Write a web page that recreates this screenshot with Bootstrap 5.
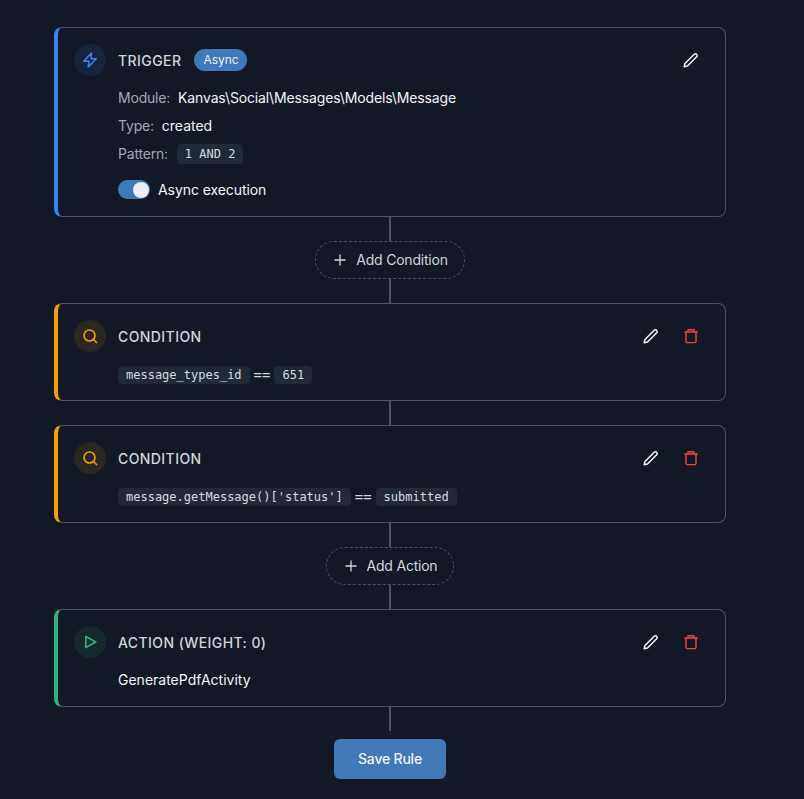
<!DOCTYPE html>
<html lang="en">
<head>
<meta charset="utf-8">
<title>Rule</title>
<link href="https://cdn.jsdelivr.net/npm/bootstrap@5.3.0/dist/css/bootstrap.min.css" rel="stylesheet">
<style>
html,body{background:#121826;height:799px;overflow:hidden}
body{font-family:Inter,"Liberation Sans",sans-serif;color:#f3f4f6;font-size:14px}
.flow{width:672px;margin-left:54px;padding-top:27px}
.step{background:#121826;border:1px solid #4b5563;border-left:4px solid #3b82f6;border-radius:8px;padding:16px}
.step-cond{border-left-color:#f59e0b}
.step-act{border-left-color:#34b27b}
.step-head{height:32px}
.ico{width:32px;height:32px;border-radius:50%;flex:none}
.ico-t{background:#16243d;color:#3b82f6}
.ico-c{background:#2a2620;color:#f59e0b}
.ico-a{background:#162a2d;color:#34b27b}
.ttl{font-size:14px;font-weight:500;letter-spacing:.42px;color:#d1d5db;margin-left:12px}
.pill{background:#4178b8;color:#e8eefb;font-size:12px;border-radius:11px;height:22px;padding:0 9px;margin-left:13px;line-height:22px;letter-spacing:-.05px}
.act{width:24px;height:24px;background:none;border:0;padding:0;margin-left:16px;color:#f3f4f6}
.act-del{color:#ef4444}
.act-wrap{margin-right:6px}
.body{margin-left:44px}
.lbl{color:#a3a9b4;letter-spacing:-.2px}
.val{margin-left:8px;color:#f3f4f6}
.val-tight{letter-spacing:-.14px}
.ln{height:28px}
.cd{font-family:"DejaVu Sans Mono","Liberation Mono",monospace;font-size:12px;color:#d8dbe1;background:#1f2937;border-radius:4px;padding:0 8px;height:18px;line-height:18px;display:inline-block;white-space:pre}
.cd-pat{margin:1px 0 0 9px;height:20px;line-height:20px}
.eq{color:#d1d5db;font-family:"DejaVu Sans Mono",monospace;font-size:14px;margin:0 4px}
.tog{width:32px;height:19px;border-radius:10px;background:#4178b8;position:relative;flex:none}
.knob{position:absolute;right:1px;top:1.5px;width:16px;height:16px;border-radius:50%;background:#eceff8}
.conn{width:2px;height:24px;background:#4b5563;margin:0 auto}
.adder{height:38px;border:1px dashed #4b5563;border-radius:19px;background:transparent;color:#d1d5db;font-size:14px;letter-spacing:-.22px;padding:0 0 2px;display:flex;align-items:center;justify-content:center;margin:0 auto}
.adder svg{margin:2px 0 0 1px}
.adder span{margin-left:9px}
.save{display:block;margin:8px auto 0;width:112px;height:40px;padding:0 0 2px;background:#4178b8;border:0;border-radius:6px;color:#eef2fb;font-size:14px;font-weight:500;letter-spacing:-.2px}
</style>
</head>
<body>
<div class="flow">
  <section class="step" style="height:190px">
    <div class="step-head d-flex align-items-center">
      <span class="ico ico-t d-flex align-items-center justify-content-center"><svg width="16" height="16" viewBox="0 0 16 16" fill="none" stroke="currentColor" stroke-width="1.6" stroke-linecap="round" stroke-linejoin="round"><path d="M9.500 1 1.800 9.300H7L6.200 15l8-8.300H9z"/></svg></span>
      <span class="ttl">TRIGGER</span><span class="pill">Async</span>
      <div class="ms-auto d-flex act-wrap"><button class="act d-flex align-items-center justify-content-center" aria-label="Edit"><svg width="16" height="16" viewBox="0 0 16 16" fill="none" stroke="currentColor" stroke-width="1.5" stroke-linejoin="round"><path d="M1.2 14.8 2 11.5 11.2 2.3a1.6 1.6 0 0 1 2.3 0l.2.2a1.6 1.6 0 0 1 0 2.3L4.500 14z"/></svg></button></div>
    </div>
    <div class="body" style="margin-top:7px">
      <div class="ln d-flex align-items-center"><span class="lbl">Module:</span><span class="val val-tight">Kanvas\Social\Messages\Models\Message</span></div>
      <div class="ln d-flex align-items-center"><span class="lbl">Type:</span><span class="val">created</span></div>
      <div class="ln d-flex align-items-center"><span class="lbl">Pattern:</span><span class="cd cd-pat">1 AND 2</span></div>
      <div class="d-flex align-items-center" style="margin-top:12px"><span class="tog"><span class="knob"></span></span><span style="margin-left:8px;color:#f3f4f6;letter-spacing:-.07px">Async execution</span></div>
    </div>
  </section>
  <div class="conn"></div>
  <button class="adder" style="width:150px"><svg width="14" height="14" viewBox="0 0 14 14" stroke="currentColor" stroke-width="1.3" fill="none"><path d="M7 1.500v11M1.500 7h11"/></svg><span>Add Condition</span></button>
  <div class="conn"></div>
  <section class="step step-cond" style="height:98px">
    <div class="step-head d-flex align-items-center">
      <span class="ico ico-c d-flex align-items-center justify-content-center"><svg width="16" height="16" viewBox="0 0 16 16" fill="none" stroke="currentColor" stroke-width="1.6" stroke-linecap="round"><circle cx="7.500" cy="7.500" r="5.500"/><path d="m11.500 11.500 3 3"/></svg></span>
      <span class="ttl">CONDITION</span>
      <div class="ms-auto d-flex act-wrap">
        <button class="act d-flex align-items-center justify-content-center" aria-label="Edit"><svg width="16" height="16" viewBox="0 0 16 16" fill="none" stroke="currentColor" stroke-width="1.5" stroke-linejoin="round"><path d="M1.2 14.8 2 11.5 11.2 2.3a1.6 1.6 0 0 1 2.3 0l.2.2a1.6 1.6 0 0 1 0 2.3L4.500 14z"/></svg></button>
        <button class="act act-del d-flex align-items-center justify-content-center" aria-label="Delete"><svg width="16" height="16" viewBox="0 0 16 16" fill="none" stroke="currentColor" stroke-width="1.4" stroke-linejoin="round"><path d="M1.200 4h13.600M5 4V1.700h6V4M3 4v9.800l.8.800h8.400l.8-.8V4"/></svg></button>
      </div>
    </div>
    <div class="body d-flex align-items-center" style="margin-top:14px;height:18px"><span class="cd">message_types_id</span><span class="eq">==</span><span class="cd">651</span></div>
  </section>
  <div class="conn"></div>
  <section class="step step-cond" style="height:98px">
    <div class="step-head d-flex align-items-center">
      <span class="ico ico-c d-flex align-items-center justify-content-center"><svg width="16" height="16" viewBox="0 0 16 16" fill="none" stroke="currentColor" stroke-width="1.6" stroke-linecap="round"><circle cx="7.500" cy="7.500" r="5.500"/><path d="m11.500 11.500 3 3"/></svg></span>
      <span class="ttl">CONDITION</span>
      <div class="ms-auto d-flex act-wrap">
        <button class="act d-flex align-items-center justify-content-center" aria-label="Edit"><svg width="16" height="16" viewBox="0 0 16 16" fill="none" stroke="currentColor" stroke-width="1.5" stroke-linejoin="round"><path d="M1.2 14.8 2 11.5 11.2 2.3a1.6 1.6 0 0 1 2.3 0l.2.2a1.6 1.6 0 0 1 0 2.3L4.500 14z"/></svg></button>
        <button class="act act-del d-flex align-items-center justify-content-center" aria-label="Delete"><svg width="16" height="16" viewBox="0 0 16 16" fill="none" stroke="currentColor" stroke-width="1.4" stroke-linejoin="round"><path d="M1.200 4h13.600M5 4V1.700h6V4M3 4v9.800l.8.800h8.400l.8-.8V4"/></svg></button>
      </div>
    </div>
    <div class="body d-flex align-items-center" style="margin-top:14px;height:18px"><span class="cd">message.getMessage()['status']</span><span class="eq">==</span><span class="cd">submitted</span></div>
  </section>
  <div class="conn"></div>
  <button class="adder" style="width:128px"><svg width="14" height="14" viewBox="0 0 14 14" stroke="currentColor" stroke-width="1.3" fill="none"><path d="M7 1.500v11M1.500 7h11"/></svg><span>Add Action</span></button>
  <div class="conn"></div>
  <section class="step step-act" style="height:98px">
    <div class="step-head d-flex align-items-center">
      <span class="ico ico-a d-flex align-items-center justify-content-center"><svg width="16" height="16" viewBox="0 0 16 16" fill="none" stroke="currentColor" stroke-width="1.6" stroke-linejoin="round"><path d="M3.800 2.500 13.800 8 3.800 13.500z"/></svg></span>
      <span class="ttl">ACTION (WEIGHT: 0)</span>
      <div class="ms-auto d-flex act-wrap">
        <button class="act d-flex align-items-center justify-content-center" aria-label="Edit"><svg width="16" height="16" viewBox="0 0 16 16" fill="none" stroke="currentColor" stroke-width="1.5" stroke-linejoin="round"><path d="M1.2 14.8 2 11.5 11.2 2.3a1.6 1.6 0 0 1 2.3 0l.2.2a1.6 1.6 0 0 1 0 2.3L4.500 14z"/></svg></button>
        <button class="act act-del d-flex align-items-center justify-content-center" aria-label="Delete"><svg width="16" height="16" viewBox="0 0 16 16" fill="none" stroke="currentColor" stroke-width="1.4" stroke-linejoin="round"><path d="M1.200 4h13.600M5 4V1.700h6V4M3 4v9.800l.8.800h8.400l.8-.8V4"/></svg></button>
      </div>
    </div>
    <div class="body" style="margin-top:12px;line-height:20px">GeneratePdfActivity</div>
  </section>
  <div class="conn"></div>
  <button class="save">Save Rule</button>
</div>
</body>
</html>
